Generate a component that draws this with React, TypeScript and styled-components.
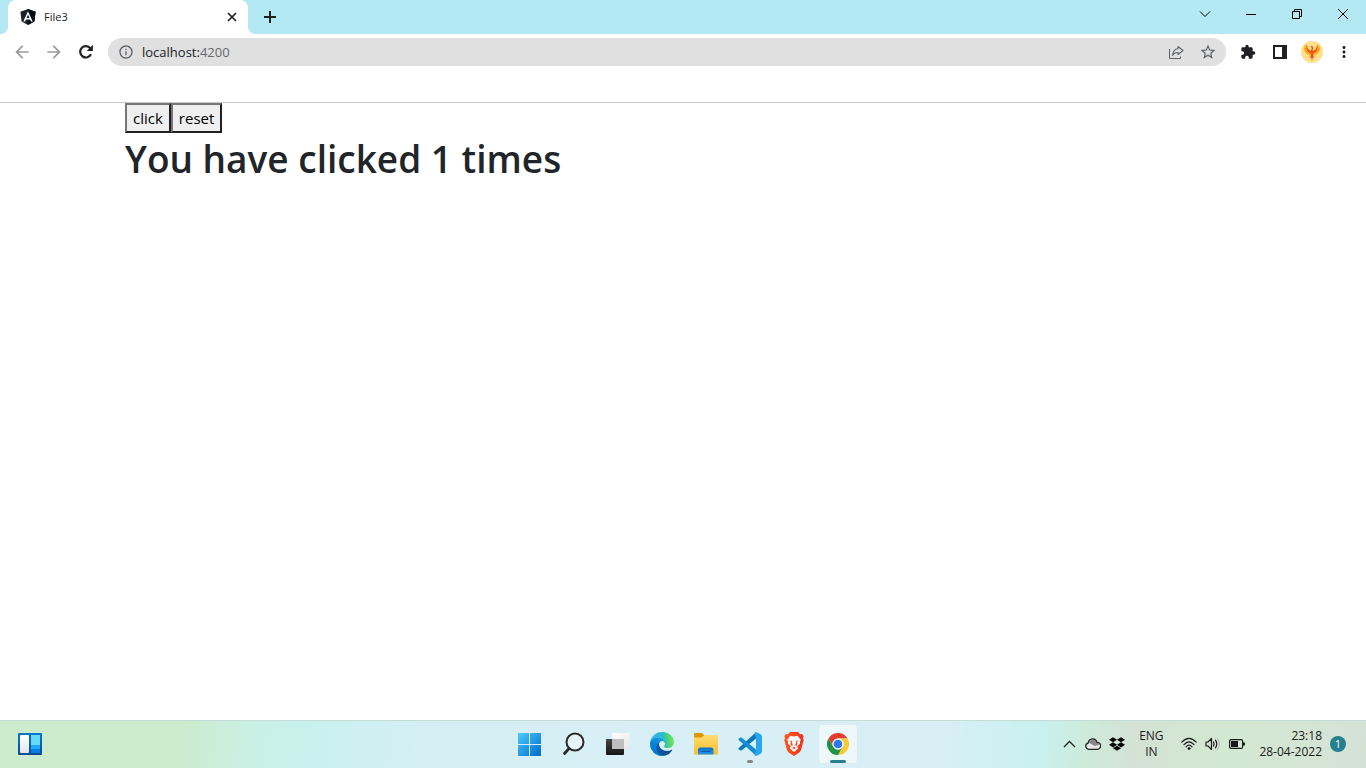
import React, { useState } from "react";
import styled, { createGlobalStyle, css } from "styled-components";
import { SiDropbox } from "react-icons/si";
import { MdExtension, MdStarBorder, MdMoreVert, MdArrowBack, MdArrowForward, MdInfoOutline } from "react-icons/md";

const GlobalStyle = createGlobalStyle`
  *, *::before, *::after { box-sizing: border-box; }
  body { margin: 0; background: #fff; }
  button, input { font: inherit; }
`;

const Screen = styled.div`
  display: flex;
  flex-direction: column;
  min-height: 100vh;
  font-family: "Open Sans", "Noto Sans", sans-serif;
  color: #202124;
`;

const TabStrip = styled.header`
  display: flex;
  align-items: stretch;
  height: 34px;
  padding-left: 8px;
  background: #b4e8f2;
`;

const Tab = styled.div`
  position: relative;
  display: flex;
  align-items: center;
  gap: 8px;
  width: 240px;
  padding: 0 8px 0 12px;
  background: #fff;
  border-radius: 8px 8px 0 0;
  font-size: 11px;
  &::before, &::after {
    content: "";
    position: absolute;
    bottom: 0;
    width: 8px;
    height: 8px;
  }
  &::before { left: -8px; background: radial-gradient(circle at 0 0, transparent 8px, #fff 8px); }
  &::after { right: -8px; background: radial-gradient(circle at 100% 0, transparent 8px, #fff 8px); }
`;

const TabTitle = styled.span`
  flex: 1;
  padding-bottom: 2px;
`;

const IconButton = styled.button<{ $w?: number; $dim?: boolean }>`
  display: flex;
  align-items: center;
  justify-content: center;
  flex: none;
  width: ${({ $w = 32 }) => $w}px;
  padding: 0;
  border: 0;
  background: none;
  color: ${({ $dim }) => ($dim ? "#9a9a9c" : "#202124")};
  svg { display: block; }
`;

const NewTab = styled(IconButton)`
  margin-left: 8px;
`;

const WindowControls = styled.div`
  display: flex;
  height: 28px;
  margin-left: auto;
  button { color: #000; }
`;

const Toolbar = styled.nav`
  display: flex;
  align-items: center;
  height: 36px;
  padding: 0 6px;
`;

const AddressBar = styled.div`
  display: flex;
  align-items: center;
  flex: 1;
  height: 28px;
  margin: 0 6px;
  padding: 0 2px 0 10px;
  border-radius: 14px;
  background: #e0e0e0;
  color: #5f6368;
`;

const Address = styled.a`
  flex: 1;
  margin-left: 8px;
  font-size: 13px;
  color: #666a6e;
  text-decoration: none;
  b { font-weight: 400; color: #202124; }
`;

const BookmarksBar = styled.div`
  height: 33px;
  border-bottom: 1px solid #c9c9c9;
`;

const Page = styled.main`
  flex: 1;
  width: 100%;
  max-width: 1140px;
  margin: 0 auto;
  padding: 0 12px;
  color: #212529;
`;

const Buttons = styled.div`
  display: flex;
`;

const PageButton = styled.button`
  height: 30px;
  padding: 0 6px;
  border: 2px solid;
  border-color: #767676 #212121 #212121 #767676;
  background: #efefef;
  color: #000;
  font-size: 15px;
  line-height: 24px;
`;

const Heading = styled.h1`
  margin: 0;
  font-size: 37px;
  font-weight: 600;
  line-height: 52px;
`;

const Taskbar = styled.footer`
  display: grid;
  grid-template-columns: 1fr auto 1fr;
  align-items: center;
  height: 48px;
  box-shadow: inset 0 1px #c4dcd8;
  background: linear-gradient(95deg, #cdebcd 0%, #cdebcd 13%, #c9f0e2 18%, #c8f1ef 23%, #d6eff5 31%, #d8eff6 69%, #c8f1ef 76%, #cdebdc 79%, #d3e2d4 83%, #d3e8d2 90%, #d4e2d6 100%);
`;

const TaskGroup = styled.div`
  display: flex;
  gap: 4px;
  padding-left: 2px;
`;

const WidgetsButton = styled(IconButton)`
  margin-left: 10px;
`;

const TaskButton = styled.button<{ $active?: boolean; $mark?: "idle" | "active" }>`
  position: relative;
  display: flex;
  align-items: center;
  justify-content: center;
  width: 40px;
  height: 40px;
  padding: 0;
  border: 1px solid ${({ $active }) => ($active ? "#dfeaf0" : "transparent")};
  border-radius: 4px;
  background: ${({ $active }) => ($active ? "#edf8fb" : "none")};
  svg { display: block; }
  ${({ $mark }) => $mark && css`
    &::after {
      content: "";
      position: absolute;
      bottom: 0;
      width: ${$mark === "active" ? 16 : 6}px;
      height: 3px;
      border-radius: 2px;
      background: ${$mark === "active" ? "#26808f" : "#85898c"};
    }
  `}
`;

const Tray = styled.div`
  display: flex;
  align-items: center;
  justify-content: flex-end;
  padding-right: 20px;
  font-size: 11px;
  line-height: 16px;
  color: #1a1a1a;
`;

const Language = styled.div`
  width: 44px;
  font-size: 12px;
  text-align: center;
`;

const StatusIcons = styled.div`
  display: flex;
  margin: 0 10px 0 4px;
`;

const Clock = styled.time`
  font-size: 12px;
  text-align: right;
`;

const Badge = styled.span`
  display: flex;
  align-items: center;
  justify-content: center;
  width: 16px;
  height: 16px;
  margin-left: 8px;
  border-radius: 50%;
  background: #26808f;
  color: #fff;
`;

const Angular = () => (
  <svg width="16" height="16" viewBox="0 0 16 16" aria-hidden="true">
    <path d="M8 0 15.6 2.7 14.4 12.6 8 16 1.6 12.6 .4 2.7Z" fill="#1c2228" />
    <path d="M8 0 15.6 2.7 14.4 12.6 8 16Z" fill="#070b12" />
    <path d="M8 2.2 3.3 12.6H5L6 10.4H10L11 12.6H12.7ZM8 5.5 9.4 8.9H6.6Z" fill="#fff" fillRule="evenodd" />
  </svg>
);

const Reload = () => (
  <svg width="16" height="16" viewBox="0 0 16 16" aria-hidden="true">
    <path d="M13 10.300A5.700 5.700 0 1 1 12.300 4.200" fill="none" stroke="#202124" strokeWidth="2.200" />
    <path d="M14.900 .8V7H8.700Z" fill="#202124" />
  </svg>
);

const Share = () => (
  <svg width="16" height="16" viewBox="0 0 16 16" fill="none" stroke="#5f6368" aria-hidden="true">
    <path d="M1.500 5V14.500H12.500V12.500" />
    <path d="M10 2.500 15 6.500 10 10.500V8.500C7.500 8.500 5.500 9.500 4.500 11.500 4.900 7.500 7 5 10 4.800Z" strokeWidth="1.100" strokeLinejoin="round" />
  </svg>
);

const Phoenix = () => (
  <svg width="22" height="22" viewBox="0 0 22 22" aria-hidden="true">
    <circle cx="11" cy="11" r="11" fill="#ffe08c" />
    <path d="M3 5C2 10 5 14 9 14.500L11 17 13 14.500C17 14 20 10 19 5L16 3.500 14.500 8 11 10 7.500 8 6 3.500Z" fill="#fdbb2e" />
    <path d="M5.500 4C5 8 6.500 11.500 9.800 12.500L9.800 15 8.500 17 10.300 16.500 11 20.500 11.700 16.500 13.500 17 12.200 15 12.200 12.500C15.500 11.500 17 8 16.500 4L15 8 12.800 10 11.600 9.500 12.300 6.500 11 4.800 9.300 5.800 10.800 6.700 10 9.500 9.200 10 7 8Z" fill="#f0501e" />
    <path d="M4 7Q4.500 10.500 7.500 12M18 7Q17.500 10.500 14.500 12" fill="none" stroke="#f78b20" />
  </svg>
);

const Widgets = () => (
  <svg width="24" height="22" viewBox="0 0 24 22" aria-hidden="true">
    <defs>
      <linearGradient id="wf" x2="0" y2="1"><stop stopColor="#0878cc" /><stop offset="1" stopColor="#0c4b94" /></linearGradient>
      <linearGradient id="ww" x2="0" y2="1"><stop stopColor="#fff" /><stop offset="1" stopColor="#e4e6ea" /></linearGradient>
    </defs>
    <rect width="24" height="22" rx="1" fill="url(#wf)" />
    <rect x="2" y="2" width="9" height="18" rx="1" fill="url(#ww)" />
    <path d="M13 2H22V12H13Z" fill="#66d9ff" />
    <path d="M13 12H22V16H13Z" fill="#22a7f8" />
    <path d="M13 16H22V20H13Z" fill="#087fe4" />
  </svg>
);

const Windows = () => (
  <svg width="24" height="24" viewBox="0 0 24 24" aria-hidden="true">
    <defs><linearGradient id="win" gradientUnits="userSpaceOnUse" x1="0" y1="0" x2="24" y2="24"><stop stopColor="#4ccdfb" /><stop offset="1" stopColor="#0069c9" /></linearGradient></defs>
    <path d="M.5 1H11V12H0V1.500ZM12 1H22.500L23 1.500V12H12ZM0 13H11V24H.5L0 23.500ZM12 13H23V23.500L22.500 24H12Z" fill="url(#win)" />
  </svg>
);

const Search = () => (
  <svg width="24" height="24" viewBox="0 0 24 24" fill="none" aria-hidden="true">
    <circle cx="13" cy="10" r="8.500" fill="#e6f3f8" stroke="#292929" strokeWidth="2" />
    <path d="M7 16.500 2.500 21.500" stroke="#292929" strokeWidth="2.800" strokeLinecap="round" />
  </svg>
);

const TaskView = () => (
  <svg width="24" height="24" viewBox="0 0 24 24" aria-hidden="true">
    <defs>
      <linearGradient id="tb" x2="0" y2="1"><stop stopColor="#454545" /><stop offset="1" stopColor="#161616" /></linearGradient>
      <linearGradient id="tw" x2="1" y2="1"><stop stopColor="#fff" /><stop offset="1" stopColor="#e6e6e6" /></linearGradient>
    </defs>
    <rect x="0" y="7" width="18" height="16" rx="1" fill="url(#tb)" />
    <rect x="6" y="1" width="18" height="16" rx="1" fill="url(#tw)" />
    <path d="M6 7H18V17H7Q6 17 6 16Z" fill="#bfbfbf" />
  </svg>
);

const Edge = () => (
  <svg width="24" height="24" viewBox="0 0 256 256" aria-hidden="true">
    <defs>
      <linearGradient id="e1" x1="63" y1="177" x2="242" y2="177" gradientUnits="userSpaceOnUse"><stop stopColor="#0c59a4" /><stop offset="1" stopColor="#114a8b" /></linearGradient>
      <linearGradient id="e2" x1="157" y1="100" x2="46" y2="221" gradientUnits="userSpaceOnUse"><stop stopColor="#1b9de2" /><stop offset=".16" stopColor="#1595df" /><stop offset=".67" stopColor="#0680d7" /><stop offset="1" stopColor="#0078d4" /></linearGradient>
      <linearGradient id="e3" x1="10" y1="90" x2="250" y2="70" gradientUnits="userSpaceOnUse"><stop stopColor="#35b5e8" /><stop offset=".3" stopColor="#2cb3e2" /><stop offset=".6" stopColor="#2fc2b8" /><stop offset=".85" stopColor="#5bdb5f" /><stop offset="1" stopColor="#66eb6e" /></linearGradient>
    </defs>
    <path d="M231 190.500c-3.400 1.800-6.900 3.400-10.500 4.700a101.700 101.700 0 0 1-35.900 6.500c-47.300 0-88.500-32.500-88.500-74.300a31.500 31.500 0 0 1 16.400-27.300c-42.800 1.800-53.800 46.400-53.800 72.500 0 73.900 68.100 81.400 82.800 81.400 7.900 0 19.800-2.300 27-4.600l1.300-.4a128.300 128.300 0 0 0 66.600-52.800 4 4 0 0 0-5.400-5.700Z" fill="url(#e1)" />
    <path d="M105.700 241.400a79.200 79.200 0 0 1-22.700-21.300 80.700 80.700 0 0 1 29.500-120c3.200-1.500 8.500-4.100 15.600-4a32.400 32.400 0 0 1 25.700 13 31.900 31.900 0 0 1 6.300 18.700c0-.2 24.500-79.600-80-79.600-43.900 0-80 41.600-80 78.200a130.200 130.200 0 0 0 12.100 56 128 128 0 0 0 156.400 67 75.500 75.500 0 0 1-62.800-8Z" fill="url(#e2)" />
    <path d="M152.300 148.900c-.9 1-3.400 2.500-3.400 5.600 0 2.600 1.700 5.100 4.700 7.200 14.400 10 41.500 8.700 41.600 8.700a59.600 59.600 0 0 0 30.300-8.300 61.400 61.400 0 0 0 30.400-52.900c.3-22.400-8-37.300-11.300-43.900C223.500 23.900 177.700 0 128 0A128 128 0 0 0 0 126.200c.5-36.500 36.800-66 80-66 3.500 0 23.500.3 42 10.100 16.300 8.600 24.900 19 30.800 29.200 6.200 10.700 7.300 24.100 7.300 29.500s-2.700 13.300-7.800 19.900Z" fill="url(#e3)" />
  </svg>
);

const Folder = () => (
  <svg width="24" height="24" viewBox="0 0 24 24" aria-hidden="true">
    <defs>
      <linearGradient id="fy" x2="0" y2="1"><stop stopColor="#ffdc73" /><stop offset="1" stopColor="#f9bd2b" /></linearGradient>
      <linearGradient id="fb" x2="0" y2="1"><stop stopColor="#0b6fca" /><stop offset="1" stopColor="#2b93e4" /></linearGradient>
    </defs>
    <path d="M0 2Q0 1 1 1H8L10.500 3.500 8 7H0Z" fill="#d99a05" />
    <path d="M0 5.500H7.500L10.500 3H23Q24 3 24 4V22.500H0Z" fill="url(#fy)" />
    <path d="M4 22.500V18Q4 15.500 6.500 15.500H17Q19.500 15.500 19.500 18V22.500Z" fill="url(#fb)" />
    <path d="M7.500 19.500H16.500" stroke="#0c5aa8" />
  </svg>
);

const VsCode = () => (
  <svg width="24" height="24" viewBox="0 0 24 24" aria-hidden="true">
    <path d="M18 .2 1 15.800 .4 17 2.300 18.500 3.500 18.400 18 6.500Z" fill="#0879bd" />
    <path d="M18 23.800 1 8.200 .4 7 2.300 5.500 3.500 5.600 18 17.500Z" fill="#168cd2" />
    <path d="M16.600 23.500 18 17.500V6.500L16.600 .5 18 0 23 2.400 24 4V20L23 21.600 18 24Z" fill="#2aa5ef" />
  </svg>
);

const Brave = () => (
  <svg width="20" height="24" viewBox="0 0 20 24" aria-hidden="true">
    <defs><linearGradient id="br"><stop stopColor="#ff5a1c" /><stop offset="1" stopColor="#f5301f" /></linearGradient></defs>
    <path d="M6 0H14L16 2.200 18 2 19.700 4.300 19 6 19.700 8 17.200 17.500Q16.700 19.500 15 20.700L10 24 5 20.700Q3.300 19.500 2.800 17.500L.3 8 1 6 .3 4.300 2 2 4 2.200Z" fill="url(#br)" />
    <path d="M10 4.500 13.500 3.800 16.800 7.800 15.800 10 16 11.500 13.200 14.600 14 16.500 10 20 6 16.500 6.800 14.600 4 11.500 4.200 10 3.200 7.800 6.500 3.800Z" fill="#fff" />
    <path d="M5 8.600 8.200 9 7.900 10.300 8.800 13.300 7.800 14.300 6.300 11.800 7.400 10.300ZM15 8.600 11.800 9 12.100 10.300 11.200 13.300 12.200 14.300 13.700 11.800 12.600 10.300ZM8 15.800 10 15 12 15.800 10 17.200Z" fill="#f8431e" />
  </svg>
);

const Chrome = () => (
  <svg width="22" height="22" viewBox="0 0 48 48" aria-hidden="true">
    <circle cx="24" cy="24" r="24" fill="#fff" />
    <path d="M3.200 12A24 24 0 0 1 44.800 12H24A12 12 0 0 0 13.600 30Z" fill="#e33b2e" />
    <path d="M44.800 12A24 24 0 0 1 24 48L34.400 30A12 12 0 0 0 24 12Z" fill="#fcc934" />
    <path d="M24 48A24 24 0 0 1 3.200 12L13.600 30A12 12 0 0 0 34.400 30Z" fill="#229342" />
    <circle cx="24" cy="24" r="12" fill="#fff" />
    <circle cx="24" cy="24" r="9.500" fill="#2b78e8" />
  </svg>
);

const Cloud = () => (
  <svg width="16" height="12" viewBox="0 0 16 12" aria-hidden="true">
    <path d="M3.800 11.300A3.300 3.300 0 0 1 3.300 4.800C4 0 10.500-.6 12 4.300A3.500 3.500 0 0 1 12.300 11.300Z" fill="#e8e8e8" />
    <path d="M1 8C1 5.500 2.500 4.800 4.500 5L9.500 8 15 6.500C13.500 4.800 12 5 11.500 4.500 10.500 .5 5 .5 4 5Z" fill="#888" />
    <path d="M3.800 11.300A3.300 3.300 0 0 1 3.300 4.800C4 0 10.500-.6 12 4.300A3.500 3.500 0 0 1 12.300 11.300Z" fill="none" stroke="#222" strokeWidth="1.200" />
  </svg>
);

const Wifi = () => (
  <svg width="16" height="14" viewBox="0 0 16 14" fill="none" stroke="#1a1a1a" strokeLinecap="round" aria-hidden="true">
    <path d="M.8 5.200Q8-2.500 15.200 5.200M3 7.600Q8 2 13 7.600M5 9.800Q8 6.500 11 9.800" strokeWidth="1.200" />
    <circle cx="8" cy="11.500" r="1" fill="#1a1a1a" />
  </svg>
);

const Volume = () => (
  <svg width="16" height="14" viewBox="0 0 16 14" fill="none" stroke="#1a1a1a" strokeLinecap="round" strokeLinejoin="round" aria-hidden="true">
    <path d="M1 5H3L6.500 1.500V12.500L3 9H1Z" strokeWidth="1.200" />
    <path d="M8.500 5Q9.800 7 8.500 9M10.500 3.200Q13 7 10.500 10.800" strokeWidth="1.200" />
    <path d="M12.500 1.500Q16.500 7 12.500 12.500" stroke="#a9b8a9" />
  </svg>
);

const Battery = () => (
  <svg width="16" height="10" viewBox="0 0 16 10" aria-hidden="true">
    <rect x=".6" y=".6" width="13" height="8.800" rx="1.500" fill="none" stroke="#1a1a1a" strokeWidth="1.200" />
    <rect x="2" y="2" width="7" height="6" fill="#1a1a1a" />
    <path d="M15 3.500V6.500" stroke="#1a1a1a" strokeWidth="2" />
  </svg>
);

const Line = ({ d, w = 12, h = 12, s = 1 }: { d: string; w?: number; h?: number; s?: number }) => (
  <svg width={w} height={h} viewBox={`0 0 ${w} ${h}`} fill="none" stroke="currentColor" strokeWidth={s} aria-hidden="true"><path d={d} /></svg>
);

export default function App() {
  const [count, setCount] = useState(1);
  return (
    <Screen>
      <GlobalStyle />
      <TabStrip>
        <Tab>
          <Angular />
          <TabTitle>File3</TabTitle>
          <IconButton $w={16} aria-label="Close tab"><Line d="M2 2 10 10M10 2 2 10" s={1.7} /></IconButton>
        </Tab>
        <NewTab $w={28} aria-label="New tab"><Line d="M6 0V12M0 6H12" s={2} /></NewTab>
        <WindowControls>
          <IconButton $w={46} aria-label="Search tabs"><Line d="M1 3.500 6 8.500 11 3.500" /></IconButton>
          <IconButton $w={46} aria-label="Minimize"><Line d="M1 6.500H11" /></IconButton>
          <IconButton $w={46} aria-label="Restore"><Line d="M1.500 3.500H8.500V10.500H1.500ZM3.500 3V1.500H10.500V8.500H9" /></IconButton>
          <IconButton $w={46} aria-label="Close"><Line d="M1 1 11 11M11 1 1 11" /></IconButton>
        </WindowControls>
      </TabStrip>
      <Toolbar aria-label="Browser">
        <IconButton $dim aria-label="Back"><MdArrowBack size={20} stroke="#9a9a9c" strokeWidth={0} /></IconButton>
        <IconButton $dim aria-label="Forward"><MdArrowForward size={20} /></IconButton>
        <IconButton aria-label="Reload"><Reload /></IconButton>
        <AddressBar>
          <MdInfoOutline size={16} />
          <Address href="#"><b>localhost:</b>4200</Address>
          <IconButton aria-label="Share"><Share /></IconButton>
          <IconButton aria-label="Bookmark"><MdStarBorder size={18} color="#5f6368" /></IconButton>
        </AddressBar>
        <IconButton aria-label="Extensions"><MdExtension size={16} /></IconButton>
        <IconButton aria-label="Side panel">
          <svg width="14" height="14" viewBox="0 0 14 14" aria-hidden="true"><path d="M0 0H14V14H0ZM2 2V12H9V2Z" fill="#202124" fillRule="evenodd" /></svg>
        </IconButton>
        <IconButton aria-label="Profile"><Phoenix /></IconButton>
        <IconButton aria-label="Menu"><MdMoreVert size={18} /></IconButton>
      </Toolbar>
      <BookmarksBar />
      <Page>
        <Buttons>
          <PageButton onClick={() => setCount(count + 1)}>click</PageButton>
          <PageButton onClick={() => setCount(0)}>reset</PageButton>
        </Buttons>
        <Heading>You have clicked {count} times</Heading>
      </Page>
      <Taskbar>
        <WidgetsButton $w={40} aria-label="Widgets"><Widgets /></WidgetsButton>
        <TaskGroup>
          <TaskButton aria-label="Start"><Windows /></TaskButton>
          <TaskButton aria-label="Search"><Search /></TaskButton>
          <TaskButton aria-label="Task view"><TaskView /></TaskButton>
          <TaskButton aria-label="Edge"><Edge /></TaskButton>
          <TaskButton aria-label="File Explorer"><Folder /></TaskButton>
          <TaskButton $mark="idle" aria-label="Visual Studio Code"><VsCode /></TaskButton>
          <TaskButton aria-label="Brave"><Brave /></TaskButton>
          <TaskButton $active $mark="active" aria-label="Chrome"><Chrome /></TaskButton>
        </TaskGroup>
        <Tray>
          <IconButton $w={24} aria-label="Hidden icons"><Line d="M1 9 6.500 3.500 12 9" w={13} s={1.3} /></IconButton>
          <IconButton $w={24} aria-label="OneDrive"><Cloud /></IconButton>
          <IconButton $w={24} aria-label="Dropbox"><SiDropbox size={16} color="#050505" /></IconButton>
          <Language>ENG<br />IN</Language>
          <StatusIcons>
            <IconButton $w={24} aria-label="Network"><Wifi /></IconButton>
            <IconButton $w={24} aria-label="Volume"><Volume /></IconButton>
            <IconButton $w={24} aria-label="Battery"><Battery /></IconButton>
          </StatusIcons>
          <Clock>23:18<br />28-04-2022</Clock>
          <Badge>1</Badge>
        </Tray>
      </Taskbar>
    </Screen>
  );
}
